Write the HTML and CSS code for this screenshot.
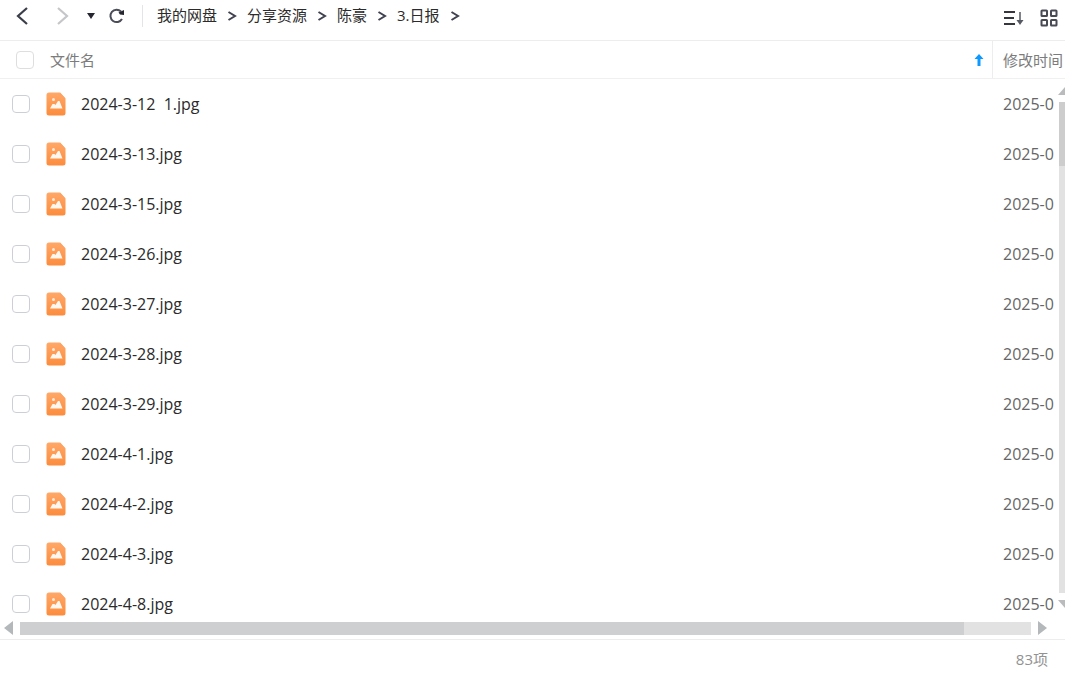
FILE: index.html
```html
<!DOCTYPE html>
<html lang="zh-CN">
<head>
<meta charset="utf-8">
<meta name="viewport" content="width=device-width, initial-scale=1">
<title>3.日报</title>
<link rel="stylesheet" href="styles.css">
</head>
<body>
<svg class="defs" aria-hidden="true">
  <defs>
    <linearGradient id="orange" x1="0" y1="0" x2="0" y2="1"><stop offset="0" stop-color="#ffa868"/><stop offset="1" stop-color="#fc8c3c"/></linearGradient>
    <symbol id="picture" viewBox="0 0 20 24">
      <path d="M3 .5h11l5.500 6v14.500a2.500 2.500 0 0 1-2.500 2.500H3A2.500 2.500 0 0 1 .5 21V3A2.500 2.500 0 0 1 3 .5z" fill="url(#orange)"/>
      <path d="M14 .5l5.500 6h-4a1.500 1.500 0 0 1-1.500-1.500z" fill="#ffa261"/>
      <circle cx="7.500" cy="7.500" r="1.500" fill="#ffe9d8"/>
      <path d="M4 16.500l2.500-4.500h2l1 1 2.500-4h1.500l3 7.500z" fill="#fff6ee"/>
    </symbol>
    <symbol id="chevron" viewBox="0 0 10 12"><path d="M1.500 2l6.500 4-6.500 4" fill="none" stroke="#40424f" stroke-width="2"/></symbol>
  </defs>
</svg>
<main class="app">
  <header class="toolbar">
    <button class="icon-button" aria-label="后退"><svg width="14" height="20" viewBox="0 0 14 20"><path d="M11 2L2 10l9 8" fill="none" stroke="#3b3d4a" stroke-width="2.200"/></svg></button>
    <button class="icon-button forward" aria-label="前进"><svg width="14" height="20" viewBox="0 0 14 20"><path d="M2 2l9 8-9 8" fill="none" stroke="#c5c6c9" stroke-width="2.200"/></svg></button>
    <button class="icon-button history" aria-label="历史"><svg width="10" height="8" viewBox="0 0 10 8"><path d="M1 1h8L5 7z" fill="#25262f"/></svg></button>
    <button class="icon-button refresh" aria-label="刷新"><svg width="18" height="18" viewBox="0 0 18 18"><path d="M14 12A6.200 6.200 0 1 1 13 4.500" fill="none" stroke="#4a4c57" stroke-width="2"/><path d="M10.500 5.500L12 7.500l4 .5V3z" fill="#25262f"/></svg></button>
    <nav class="crumbs">
      <a href="#">我的网盘</a><svg class="sep"><use href="#chevron"/></svg>
      <a href="#">分享资源</a><svg class="sep"><use href="#chevron"/></svg>
      <a href="#">陈豪</a><svg class="sep"><use href="#chevron"/></svg>
      <a href="#">3.日报</a><svg class="sep"><use href="#chevron"/></svg>
    </nav>
    <button class="icon-button sort" aria-label="排序"><svg width="22" height="16" viewBox="0 0 22 16"><path d="M1 2h11M1 8h10M1 14h11" stroke="#35373f" stroke-width="2"/><path d="M17 2v11" stroke="#555963" stroke-width="1.500"/><path d="M13.500 10h7L17 15z" fill="#555963"/></svg></button>
    <button class="icon-button grid" aria-label="网格视图"><svg width="18" height="18" viewBox="0 0 18 18"><g fill="none" stroke="#484a54" stroke-width="2"><rect x="1.500" y="1.500" width="5.500" height="5.500" rx=".6"/><rect x="11" y="1.500" width="5.500" height="5.500" rx=".6"/><rect x="1.500" y="11" width="5.500" height="5.500" rx=".6"/><rect x="11" y="11" width="5.500" height="5.500" rx=".6"/></g></svg></button>
  </header>
  <section class="list">
    <table class="files">
      <thead>
        <tr>
          <th class="name"><div class="head"><input class="check" type="checkbox" aria-label="全选"><span>文件名</span><svg class="arrow" width="10" height="12" viewBox="0 0 10 12"><path d="M5 0l4.500 5H6.500v7h-3V5H.5z" fill="#0d99ff"/></svg></div></th>
          <th class="time">修改时间</th>
        </tr>
      </thead>
      <tbody>
        <tr><td><label class="file"><input class="check" type="checkbox"><svg class="pic"><use href="#picture"/></svg><span class="title">2024-3-12  1.jpg</span></label></td><td class="time">2025-0</td></tr>
        <tr><td><label class="file"><input class="check" type="checkbox"><svg class="pic"><use href="#picture"/></svg><span class="title">2024-3-13.jpg</span></label></td><td class="time">2025-0</td></tr>
        <tr><td><label class="file"><input class="check" type="checkbox"><svg class="pic"><use href="#picture"/></svg><span class="title">2024-3-15.jpg</span></label></td><td class="time">2025-0</td></tr>
        <tr><td><label class="file"><input class="check" type="checkbox"><svg class="pic"><use href="#picture"/></svg><span class="title">2024-3-26.jpg</span></label></td><td class="time">2025-0</td></tr>
        <tr><td><label class="file"><input class="check" type="checkbox"><svg class="pic"><use href="#picture"/></svg><span class="title">2024-3-27.jpg</span></label></td><td class="time">2025-0</td></tr>
        <tr><td><label class="file"><input class="check" type="checkbox"><svg class="pic"><use href="#picture"/></svg><span class="title">2024-3-28.jpg</span></label></td><td class="time">2025-0</td></tr>
        <tr><td><label class="file"><input class="check" type="checkbox"><svg class="pic"><use href="#picture"/></svg><span class="title">2024-3-29.jpg</span></label></td><td class="time">2025-0</td></tr>
        <tr><td><label class="file"><input class="check" type="checkbox"><svg class="pic"><use href="#picture"/></svg><span class="title">2024-4-1.jpg</span></label></td><td class="time">2025-0</td></tr>
        <tr><td><label class="file"><input class="check" type="checkbox"><svg class="pic"><use href="#picture"/></svg><span class="title">2024-4-2.jpg</span></label></td><td class="time">2025-0</td></tr>
        <tr><td><label class="file"><input class="check" type="checkbox"><svg class="pic"><use href="#picture"/></svg><span class="title">2024-4-3.jpg</span></label></td><td class="time">2025-0</td></tr>
        <tr><td><label class="file"><input class="check" type="checkbox"><svg class="pic"><use href="#picture"/></svg><span class="title">2024-4-8.jpg</span></label></td><td class="time">2025-0</td></tr>
      </tbody>
    </table>
    <div class="vbar" aria-hidden="true">
      <svg width="7" height="8" viewBox="0 0 7 8"><path d="M0 8l7-8v8z" fill="#b9bbbd"/></svg>
      <div class="vtrack"><div class="vthumb"></div></div>
      <svg width="7" height="8" viewBox="0 0 7 8"><path d="M0 0l7 8V0z" fill="#b9bbbd"/></svg>
    </div>
  </section>
  <div class="hbar" aria-hidden="true">
    <svg width="10" height="14" viewBox="0 0 10 14"><path d="M9 0v14L0 7z" fill="#b4b8bb"/></svg>
    <div class="htrack"><div class="hthumb"></div></div>
    <svg width="10" height="14" viewBox="0 0 10 14"><path d="M1 0v14l9-7z" fill="#b4b8bb"/></svg>
  </div>
  <footer class="status">83项</footer>
</main>
</body>
</html>
```

FILE: styles.css
```css
* { box-sizing: border-box; }
body {
  margin: 0;
  background: #fff;
  color: #2b2b2b;
  font: 15px/20px "Open Sans", "Noto Sans CJK SC", sans-serif;
}
.defs { position: absolute; width: 0; height: 0; }
.app { display: flex; flex-direction: column; height: 100vh; overflow: hidden; }

.toolbar {
  display: flex;
  align-items: center;
  height: 41px;
  flex: none;
  padding: 0 7px 8px 16px;
  border-bottom: 1px solid #ededee;
}
.icon-button { display: flex; padding: 0; border: 0; background: none; }
.forward { margin-left: 26px; }
.history { margin-left: 16px; }
.refresh { margin-left: 12px; }
.crumbs {
  display: flex;
  align-items: center;
  flex: 1;
  height: 22px;
  margin-left: 16px;
  padding-left: 14px;
  border-left: 1px solid #e4e4e6;
}
.crumbs a { padding-bottom: 2px; color: inherit; text-decoration: none; }
.sep { width: 10px; height: 12px; margin: 0 10px; }
.grid { margin-left: 15px; }
.sort, .grid { margin-top: 4px; }

.list { position: relative; flex: 1; min-height: 0; overflow: hidden; }
.files { width: 100%; border-spacing: 0; table-layout: fixed; }
th, td { padding: 0; font-weight: 400; text-align: left; }
th { height: 38px; border-bottom: 1px solid #f0f0f1; color: #7c7c7c; }
th.name { border-right: 1px solid #ededee; }
td { height: 50px; font-size: 16px; }
.time { width: 72px; padding-left: 10px; white-space: nowrap; }
td.time { color: #666; }
.head { display: flex; align-items: center; padding: 0 8px 0 16px; }
.head .check { border-color: #dedee0; }
.head span { margin-left: 16px; }
.arrow { margin-left: auto; }
.file { display: flex; align-items: center; padding-left: 12px; }
.check {
  appearance: none;
  flex: none;
  width: 18px;
  height: 18px;
  margin: 0;
  border: 1px solid #ccd0d6;
  border-radius: 4px;
  background: #fff;
}
.pic { width: 20px; height: 24px; margin: 0 15px 0 16px; }
.title { white-space: pre; }

.vbar {
  position: absolute;
  top: 46px;
  right: 0;
  bottom: 9px;
  display: flex;
  flex-direction: column;
  align-items: flex-end;
  gap: 7px;
  width: 7px;
}
.vtrack { flex: 1; width: 6px; background: #e2e2e2; }
.vthumb { height: 13%; background: #cdcdcd; }
.hbar {
  display: flex;
  align-items: center;
  gap: 6px;
  flex: none;
  height: 22px;
  padding: 0 18px 0 4px;
}
.htrack { flex: 1; height: 13px; background: #e2e2e2; }
.hthumb { width: 93.400%; height: 100%; background: #cecfd0; }
.status {
  flex: none;
  height: 34px;
  padding: 9px 17px 0 0;
  border-top: 1px solid #ededee;
  color: #929292;
  text-align: right;
}
```
